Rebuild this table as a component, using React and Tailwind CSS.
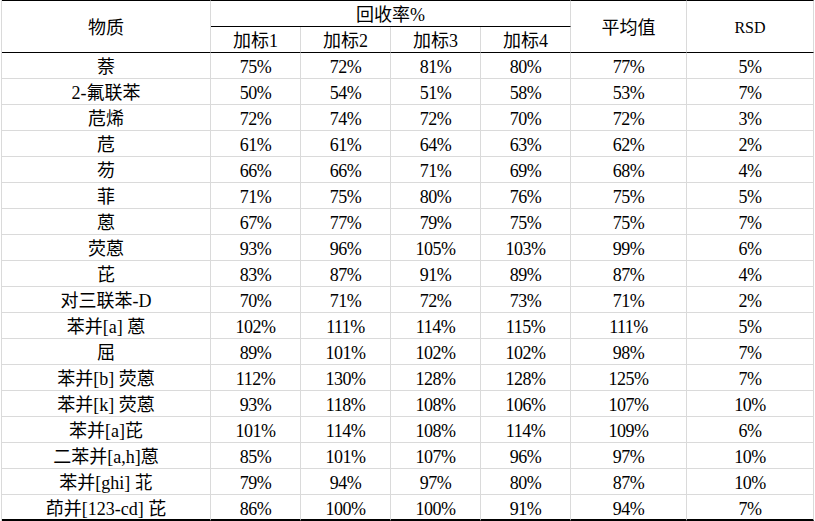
const ROWS = [
  ['萘', '75%', '72%', '81%', '80%', '77%', '5%'],
  ['2-氟联苯', '50%', '54%', '51%', '58%', '53%', '7%'],
  ['苊烯', '72%', '74%', '72%', '70%', '72%', '3%'],
  ['苊', '61%', '61%', '64%', '63%', '62%', '2%'],
  ['芴', '66%', '66%', '71%', '69%', '68%', '4%'],
  ['菲', '71%', '75%', '80%', '76%', '75%', '5%'],
  ['蒽', '67%', '77%', '79%', '75%', '75%', '7%'],
  ['荧蒽', '93%', '96%', '105%', '103%', '99%', '6%'],
  ['芘', '83%', '87%', '91%', '89%', '87%', '4%'],
  ['对三联苯-D', '70%', '71%', '72%', '73%', '71%', '2%'],
  ['苯并[a] 蒽', '102%', '111%', '114%', '115%', '111%', '5%'],
  ['屈', '89%', '101%', '102%', '102%', '98%', '7%'],
  ['苯并[b] 荧蒽', '112%', '130%', '128%', '128%', '125%', '7%'],
  ['苯并[k] 荧蒽', '93%', '118%', '108%', '106%', '107%', '10%'],
  ['苯并[a]芘', '101%', '114%', '108%', '114%', '109%', '6%'],
  ['二苯并[a,h]蒽', '85%', '101%', '107%', '96%', '97%', '10%'],
  ['苯并[ghi] 苝', '79%', '94%', '97%', '80%', '87%', '10%'],
  ['茚并[123-cd] 芘', '86%', '100%', '100%', '91%', '94%', '7%'],
]

var cjk = "font-['Liberation_Serif','Noto_Sans_CJK_SC',serif] text-[18px] leading-[20px]"
var num = "font-['Liberation_Serif',serif] text-[18px] tracking-[-0.5px] leading-[20px]"
var head = 'p-0 pt-[3px] font-normal text-center align-middle whitespace-nowrap border-r border-r-[#dadada] border-b border-b-black '

export default function App() {
  return (
    <div className="w-[815px] h-[521px] bg-white overflow-hidden text-black">
      <table className="ml-px w-[813px] table-fixed border-separate border-spacing-0 border-l border-l-[#dadada]">
        <colgroup>
          <col className="w-[209px]" />
          <col className="w-[90px]" />
          <col className="w-[90px]" />
          <col className="w-[90px]" />
          <col className="w-[90px]" />
          <col className="w-[116px]" />
          <col className="w-[127px]" />
        </colgroup>
        <thead>
          <tr className="h-[27px]">
            <th rowSpan={2} className={head + 'border-t border-t-black ' + cjk}>物质</th>
            <th colSpan={4} className={head + 'border-t border-t-black ' + cjk}>回收率%</th>
            <th rowSpan={2} className={head + 'border-t border-t-black ' + cjk}>平均值</th>
            <th rowSpan={2} className={head + "border-t border-t-black font-['Liberation_Serif',serif] text-[16px] leading-[20px]"}>RSD</th>
          </tr>
          <tr className="h-[26px]">
            {['加标1', '加标2', '加标3', '加标4'].map(function(h) {
              return (
                <th key={h} className={head + cjk}>{h}</th>
              )
            })}
          </tr>
        </thead>
        <tbody>
          {ROWS.map(function(r, i) {
            var last = i === ROWS.length - 1
            var bottom = last ? ' border-b-2 border-b-black' : ' border-b border-b-[#dadada]'
            return (
              <tr key={r[0]} className="h-[26px]">
                {r.map(function(c, j) {
                  return (
                    <td
                      key={j}
                      className={'p-0 pt-[3px] text-center align-middle whitespace-nowrap border-r border-r-[#dadada]' + bottom + ' ' + (j === 0 ? cjk : num)}
                    >
                      {c}
                    </td>
                  )
                })}
              </tr>
            )
          })}
        </tbody>
      </table>
    </div>
  )
}
